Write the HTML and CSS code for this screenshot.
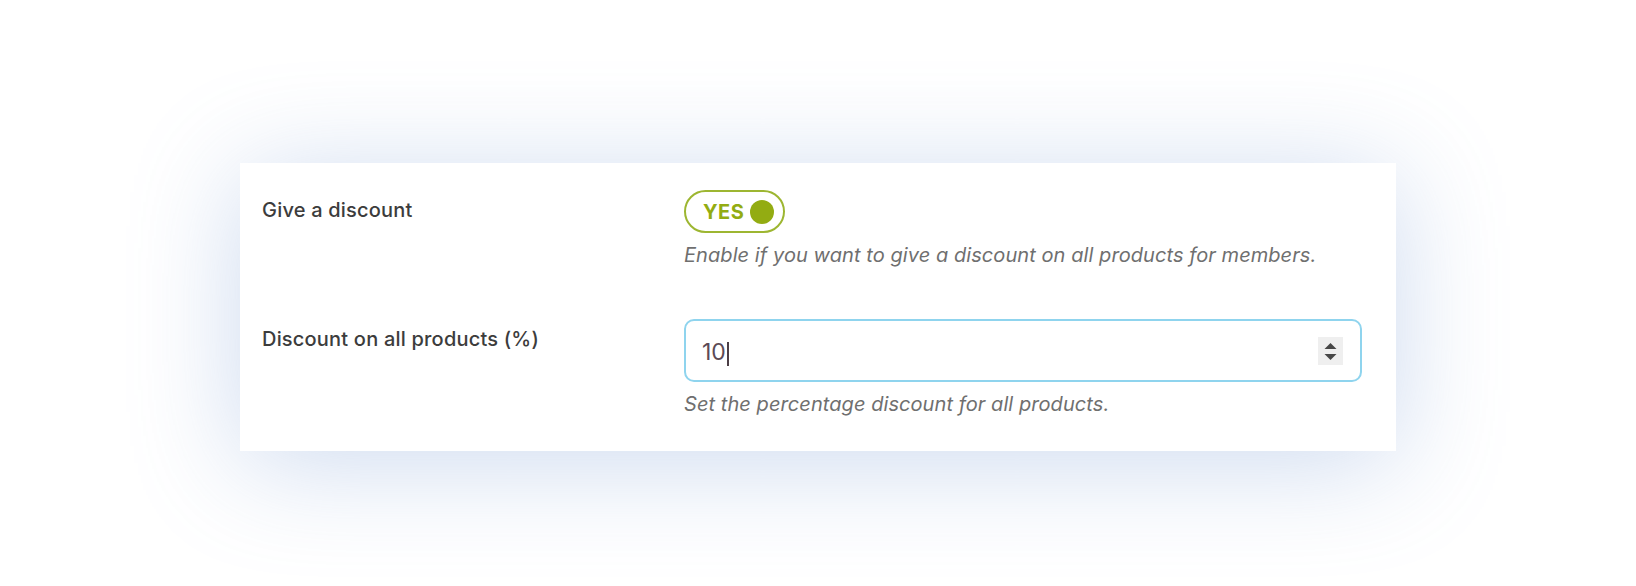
FILE: index.html
```html
<!DOCTYPE html>
<html lang="en">
<head>
    <meta charset="UTF-8">
    <meta name="viewport" content="width=device-width, initial-scale=1.0">
    <title>Member Discount Settings</title>
    <link rel="stylesheet" href="styles.css">
</head>
<body>
    <div class="page">
        <div class="card">
            <div class="row">
                <div class="label">Give a discount</div>
                <div class="field">
                    <div class="toggle">
                        <span class="toggle-text">YES</span>
                        <span class="toggle-knob"></span>
                    </div>
                    <p class="desc">Enable if you want to give a discount on all products for members.</p>
                </div>
            </div>

            <div class="row">
                <div class="label">Discount on all products (%)</div>
                <div class="field">
                    <div class="number-field">
                        <span class="number-value">10</span>
                        <span class="caret"></span>
                        <span class="spinner">
                            <svg width="25" height="28" viewBox="0 0 25 28">
                                <polygon points="6.5,12 12.5,6 18.5,12" fill="#474747"/>
                                <polygon points="6.5,17 18.5,17 12.5,23" fill="#474747"/>
                            </svg>
                        </span>
                    </div>
                    <p class="desc">Set the percentage discount for all products.</p>
                </div>
            </div>
        </div>
    </div>
</body>
</html>
```

FILE: styles.css
```css
body {
    margin: 0;
    padding: 0;
    background-color: #fff;
    font-family: Inter, "Noto Sans", sans-serif;
}

.page {
    display: flex;
    justify-content: center;
    align-items: flex-start;
    padding: 163px 0 135px;
    overflow: hidden;
}

.card {
    width: 1156px;
    box-sizing: border-box;
    background-color: #fff;
    padding: 27px 34px 33px 22px;
    box-shadow: 0 12px 110px rgba(100, 140, 205, 0.32);
    display: flex;
    flex-direction: column;
    gap: 50px;
}

.row {
    display: grid;
    grid-template-columns: 422px 1fr;
    align-items: start;
}

.label {
    font-size: 20px;
    font-weight: 500;
    letter-spacing: 0.2px;
    line-height: 28px;
    color: #3c3c3c;
    padding-top: 6px;
}

.toggle {
    display: inline-flex;
    align-items: center;
    gap: 6px;
    height: 43px;
    box-sizing: border-box;
    padding: 0 9px 0 17px;
    border: 2px solid #9db631;
    border-radius: 22px;
}

.toggle-text {
    font-size: 20px;
    font-weight: 700;
    letter-spacing: 0.5px;
    color: #93ac12;
}

.toggle-knob {
    width: 24px;
    height: 24px;
    border-radius: 50%;
    background-color: #93ac12;
}

.desc {
    margin: 8px 0 0;
    font-size: 20px;
    font-style: italic;
    letter-spacing: 0.07px;
    line-height: 28px;
    color: #6f6f6f;
}

.number-field {
    display: flex;
    align-items: center;
    height: 63px;
    box-sizing: border-box;
    padding: 0 17px 0 16px;
    border: 2px solid #8fd4ee;
    border-radius: 10px;
}

.number-value {
    font-size: 23px;
    color: #5c4a55;
    padding-top: 3px;
}

.caret {
    width: 2px;
    height: 24px;
    margin-left: 1px;
    margin-top: 6px;
    background-color: #4b3e46;
}

.spinner {
    margin-left: auto;
    width: 25px;
    height: 28px;
    background-color: #efefef;
    display: flex;
}
```
